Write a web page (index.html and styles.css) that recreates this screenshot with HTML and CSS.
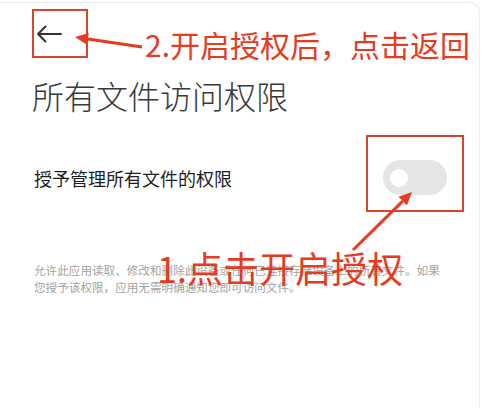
FILE: index.html
```html
<!DOCTYPE html>
<html lang="zh-CN">
<head>
<meta charset="utf-8">
<title>所有文件访问权限</title>
<link rel="stylesheet" href="styles.css">
</head>
<body>
<div class="frame">
  <div class="header">
    <svg class="back" width="26" height="18" viewBox="0 0 26 18">
      <path d="M25 9H2M9.5 1.5L2 9l7.5 7.5" fill="none" stroke="#333" stroke-width="2" stroke-linecap="round" stroke-linejoin="round"/>
    </svg>
  </div>
  <h1 class="title">所有文件访问权限</h1>
  <div class="row">
    <span class="label">授予管理所有文件的权限</span>
    <span class="toggle"><span class="knob"></span></span>
  </div>
  <p class="desc">允许此应用读取、修改和删除此设备或任何已连接存储设备上的所有文件。如果<br>您授予该权限，应用无需明确通知您即可访问文件。</p>
</div>

<div class="mark mark-back"></div>
<div class="mark mark-toggle"></div>
<div class="note note-back">2.开启授权后，点击返回</div>
<div class="note note-toggle">1.点击开启授权</div>
<svg class="arrows" width="490" height="408" viewBox="0 0 490 408">
  <line x1="142" y1="47" x2="88" y2="39" stroke="#e63b1f" stroke-width="3"/>
  <polygon points="75,37 88.8,33 87,44.8" fill="#e63b1f"/>
  <line x1="353" y1="250" x2="402.7" y2="201.1" stroke="#e63b1f" stroke-width="3"/>
  <polygon points="412,192 406.9,205.4 398.5,196.8" fill="#e63b1f"/>
</svg>
</body>
</html>
```
FILE: styles.css
```css
html, body {
  margin: 0;
  padding: 0;
  background: #fff;
}
body {
  position: relative;
  width: 490px;
  height: 408px;
  overflow: hidden;
  font-family: "Noto Sans CJK SC", "Noto Sans", sans-serif;
}
.frame {
  margin-top: 2px;
  width: 480px;
  height: 406px;
  box-sizing: border-box;
  border-top: 1px solid #ececec;
  border-right: 1px solid #ececec;
  border-top-right-radius: 10px;
}
.header {
  height: 62px;
  display: flex;
  align-items: center;
  padding-left: 36px;
}
.back {
  display: block;
}
.title {
  margin: 14px 0 0 32px;
  font-size: 32px;
  line-height: 32px;
  font-weight: 300;
  color: #3a3a3a;
}
.row {
  margin-top: 49px;
  display: flex;
  align-items: center;
  justify-content: space-between;
  padding: 0 32px 0 34px;
}
.label {
  font-size: 18px;
  line-height: 18px;
  color: #1e1e1e;
}
.toggle {
  width: 64px;
  height: 35px;
  border-radius: 18px;
  background: #e5e5e5;
  display: flex;
  align-items: center;
  padding-left: 7px;
  box-sizing: border-box;
}
.knob {
  width: 18px;
  height: 18px;
  border-radius: 50%;
  background: #fff;
}
.desc {
  margin: 67px 0 0 34px;
  font-size: 11.6px;
  line-height: 16.5px;
  color: #a3a3a3;
}
.mark {
  position: absolute;
  border: 2px solid #d8452b;
  box-sizing: border-box;
}
.mark-back {
  left: 32px;
  top: 9px;
  width: 56px;
  height: 49px;
}
.mark-toggle {
  left: 366px;
  top: 135px;
  width: 98px;
  height: 77px;
}
.note {
  position: absolute;
  color: #e63b1f;
  line-height: 1;
  white-space: nowrap;
}
.note-back {
  left: 145px;
  top: 29px;
  font-size: 30px;
}
.note-toggle {
  left: 157px;
  top: 249px;
  font-size: 36px;
}
.arrows {
  position: absolute;
  left: 0;
  top: 0;
  pointer-events: none;
}
```
